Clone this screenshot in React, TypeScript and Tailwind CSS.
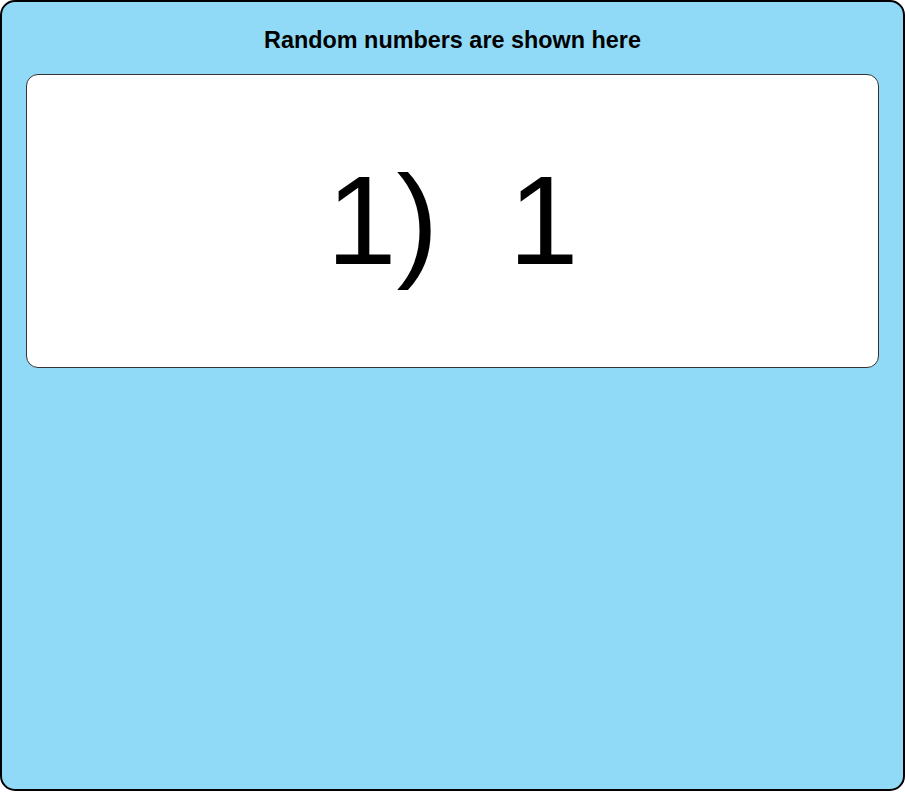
export default function App() {
  const numbers = [1];

  return (
    <div className="w-[905px] h-[791px] bg-[#91daf7] border-2 border-black rounded-[15px] px-6 flex flex-col font-['Liberation_Sans',Arial,sans-serif]">
      {/* Header */}
      <h3 className="text-center font-bold text-[23.4px] text-black pt-[25px] pb-[20px] leading-[27px]">
        Random numbers are shown here
      </h3>

      {/* Number display */}
      <div className="h-[294px] bg-white border border-[#333] rounded-[12px] flex items-center justify-center">
        {numbers.map((n, i) => (
          <span key={i} className="text-[126px] leading-none text-black whitespace-pre">
            {i + 1}){"  "}{n}
          </span>
        ))}
      </div>
    </div>
  );
}
